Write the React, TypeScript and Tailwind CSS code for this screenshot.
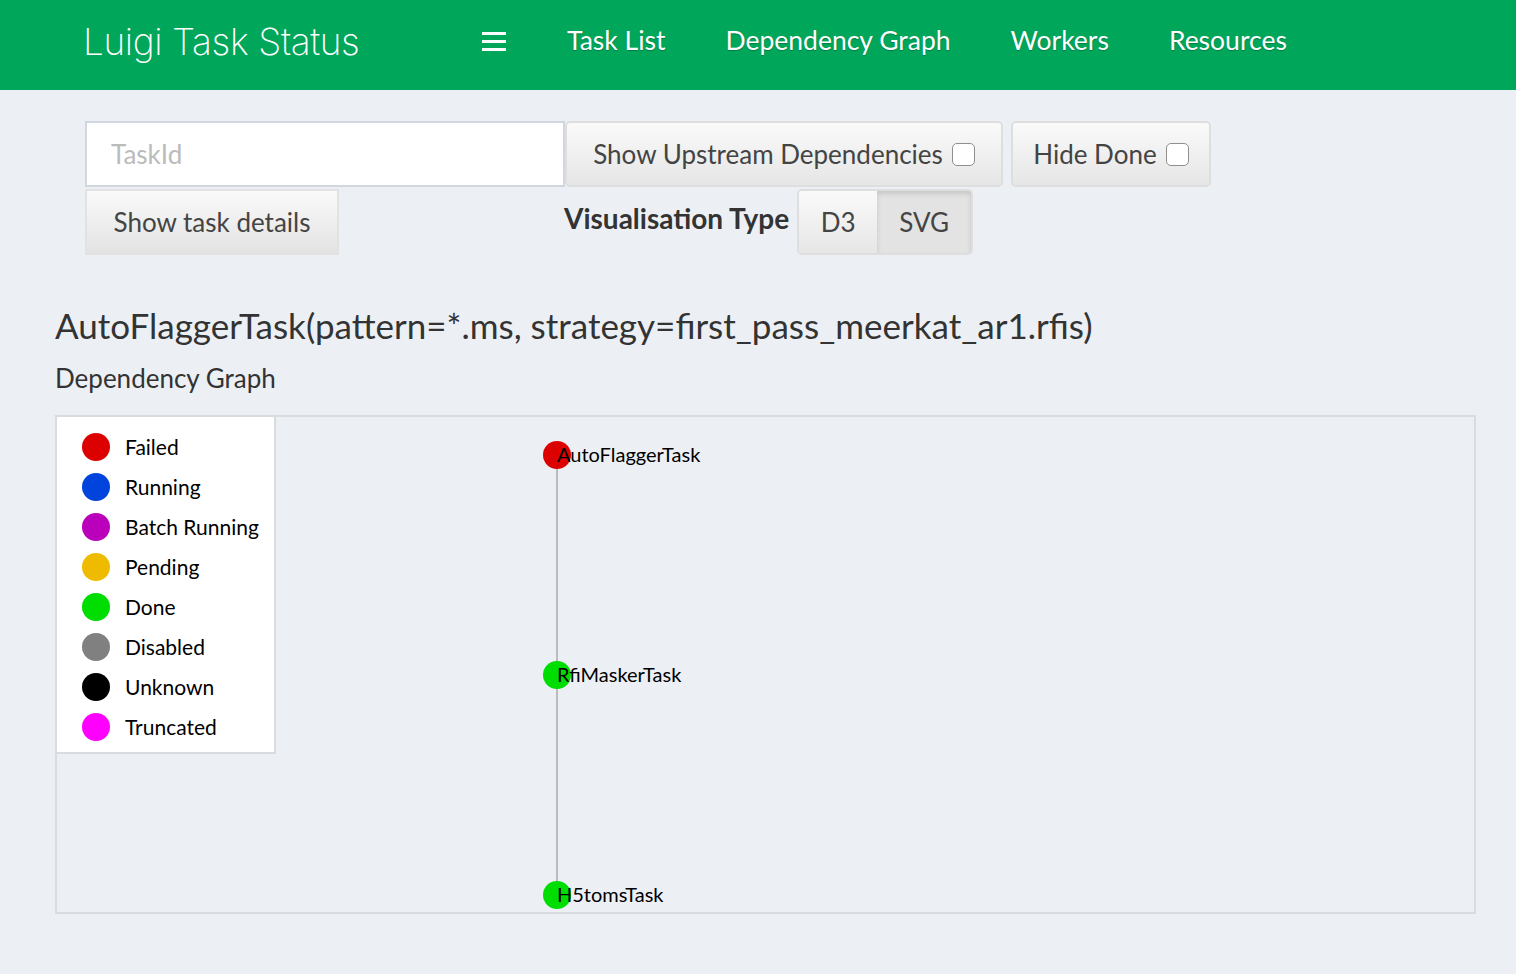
import React, { useState } from 'react'

type Status = {
  label: string
  color: string
}

const statuses: Status[] = [
  { label: 'Failed', color: '#dd0000' },
  { label: 'Running', color: '#0044dd' },
  { label: 'Batch Running', color: '#bb00bb' },
  { label: 'Pending', color: '#eebb00' },
  { label: 'Done', color: '#00dd00' },
  { label: 'Disabled', color: '#808080' },
  { label: 'Unknown', color: '#000000' },
  { label: 'Truncated', color: '#ff00ff' },
]

const nodes = [
  { name: 'AutoFlaggerTask', color: '#dd0000', y: 40 },
  { name: 'RfiMaskerTask', color: '#00dd00', y: 260 },
  { name: 'H5tomsTask', color: '#00dd00', y: 480 },
]

const navLinks = ['Task List', 'Dependency Graph', 'Workers', 'Resources']

function Checkbox() {
  return (
    <span className="inline-block w-[23px] h-[23px] rounded-[5px] border border-[#8f8f8f] bg-white ml-[9px]" />
  )
}

export default function App() {
  const [vis, setVis] = useState<'D3' | 'SVG'>('SVG')

  return (
    <div className="min-h-screen w-full bg-[#ecf0f5] font-['Lato',sans-serif] text-[#333]">
      {/* Header */}
      <header className="h-[90px] bg-[#00a65a] flex items-center pb-[8px]">
        <div className="w-[482px] pl-[83px] text-white text-[37px] font-extralight font-['Inter',sans-serif] tracking-[-0.4px] leading-none">
          Luigi Task Status
        </div>
        <button className="flex flex-col gap-[5px] w-[24px]">
          <span className="block h-[3px] w-[24px] bg-white" />
          <span className="block h-[3px] w-[24px] bg-white" />
          <span className="block h-[3px] w-[24px] bg-white" />
        </button>
        <nav className="flex ml-[31px]">
          {navLinks.map((link) => (
            <a
              key={link}
              className="px-[30px] text-white text-[26.5px] [text-shadow:0_1px_1px_rgba(0,0,0,0.25)]"
            >
              {link}
            </a>
          ))}
        </nav>
      </header>

      <main className="px-[55px] pt-[31px]">
        {/* Controls */}
        <div className="pl-[30px]">
          <div className="flex items-stretch h-[66px]">
            <input
              type="text"
              placeholder="TaskId"
              className="w-[480px] h-[66px] bg-white border-2 border-[#d2d6de] px-[24px] text-[26px] placeholder:text-[#bbb] outline-none"
            />
            <button className="w-[438px] flex items-center justify-center rounded-[5px] border-2 border-[#dedede] bg-gradient-to-b from-[#fafafa] to-[#e6e6e6] text-[26px] text-[#444]">
              Show Upstream Dependencies
              <Checkbox />
            </button>
            <button className="w-[200px] ml-[8px] flex items-center justify-center rounded-[5px] border-2 border-[#dedede] bg-gradient-to-b from-[#fafafa] to-[#e6e6e6] text-[26px] text-[#444]">
              Hide Done
              <Checkbox />
            </button>
          </div>
          <div className="flex items-start mt-[2px]">
            <div className="w-[479px]">
              <button className="w-[254px] h-[66px] border-2 border-[#e2e2e2] bg-gradient-to-b from-[#fafafa] to-[#e3e3e3] text-[26px] text-[#444]">
                Show task details
              </button>
            </div>
            <div className="flex items-start">
              <span className="mt-[8px] text-[28px] font-bold text-[#333]">
                Visualisation Type
              </span>
              <div className="ml-[8px] flex h-[66px] rounded-[5px] border-2 border-[#dedede] overflow-hidden">
                <button
                  onClick={() => setVis('D3')}
                  className={`w-[78px] text-[26px] text-[#444] ${vis === 'D3' ? 'bg-[#e3e3e3] shadow-[inset_0_3px_5px_rgba(0,0,0,0.125)]' : 'bg-gradient-to-b from-[#fafafa] to-[#e6e6e6]'}`}
                >
                  D3
                </button>
                <button
                  onClick={() => setVis('SVG')}
                  className={`w-[94px] text-[26px] text-[#444] ${vis === 'SVG' ? 'bg-[#e3e3e3] shadow-[inset_0_3px_5px_rgba(0,0,0,0.125)]' : 'bg-gradient-to-b from-[#fafafa] to-[#e6e6e6]'}`}
                >
                  SVG
                </button>
              </div>
            </div>
          </div>
        </div>

        {/* Task heading */}
        <h1 className="mt-[48px] text-[35px] leading-[44px] text-[#333]">
          AutoFlaggerTask(pattern=*.ms, strategy=first_pass_meerkat_ar1.rfis)
        </h1>
        <h2 className="mt-[16px] text-[26px] leading-[30px] text-[#333]">
          Dependency Graph
        </h2>

        {/* Graph */}
        <div className="relative mt-[22px] w-[1421px] h-[499px] border-2 border-[#d9dbdf]">
          <div className="absolute left-0 top-0 w-[219px] bg-white border-r-2 border-b-2 border-[#d9dbdf] pt-[10px] pb-[5px] pl-[25px]">
            {statuses.map((s) => (
              <div key={s.label} className="flex items-center h-[40px]">
                <span
                  className="block w-[28px] h-[28px] rounded-full"
                  style={{ backgroundColor: s.color }}
                />
                <span className="ml-[15px] text-[21px] text-black">{s.label}</span>
              </div>
            ))}
          </div>
          <svg className="block w-full h-full" width="1417" height="495">
            <line x1="500" y1="38" x2="500" y2="478" stroke="#aaaaaa" strokeWidth="1.5" />
            {nodes.map((n) => (
              <g key={n.name}>
                <circle cx="500" cy={n.y - 2} r="14" fill={n.color} />
                <text
                  x="500"
                  y={n.y + 5}
                  fontSize="20"
                  fill="#000"
                  fontFamily="Lato, sans-serif"
                >
                  {n.name}
                </text>
              </g>
            ))}
          </svg>
        </div>
      </main>
    </div>
  )
}
